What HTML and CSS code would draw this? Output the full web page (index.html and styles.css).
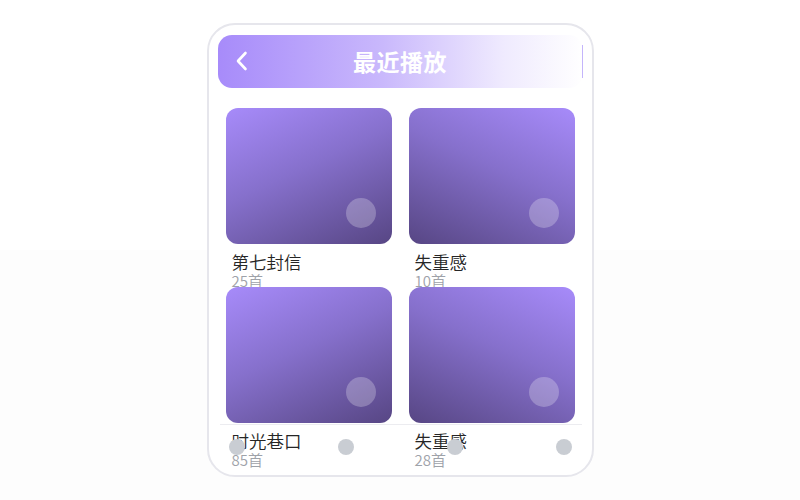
FILE: index.html
```html
<!DOCTYPE html>
<html lang="zh-CN">
<head>
    <meta charset="UTF-8">
    <meta name="viewport" content="width=device-width, initial-scale=1.0">
    <title>最近播放</title>
    <link rel="stylesheet" href="styles.css">
</head>
<body>
<div class="phone">
    <header class="top-bar">
        <button class="back" aria-label="返回">
            <svg width="14" height="20" viewBox="0 0 14 20">
                <path d="M10.5 2 L3 10 L10.5 18" fill="none" stroke="#fff" stroke-width="2.6" stroke-linecap="round" stroke-linejoin="round"/>
            </svg>
        </button>
        <h1>最近播放</h1>
    </header>

    <div class="playlists">
        <div class="playlist">
            <div class="cover"><span class="play-dot"></span></div>
            <div class="name">第七封信</div>
            <div class="count">25首</div>
        </div>
        <div class="playlist">
            <div class="cover flip"><span class="play-dot"></span></div>
            <div class="name">失重感</div>
            <div class="count">10首</div>
        </div>
        <div class="playlist">
            <div class="cover"><span class="play-dot"></span></div>
            <div class="name">时光巷口</div>
            <div class="count">85首</div>
        </div>
        <div class="playlist">
            <div class="cover flip"><span class="play-dot"></span></div>
            <div class="name">失重感</div>
            <div class="count">28首</div>
        </div>
    </div>

    <nav class="tab-bar">
        <span class="tab"></span>
        <span class="tab"></span>
        <span class="tab"></span>
        <span class="tab"></span>
    </nav>
</div>
</body>
</html>
```

FILE: styles.css
```css
* {
    box-sizing: border-box;
    margin: 0;
    padding: 0;
}

body {
    height: 100vh;
    display: flex;
    align-items: center;
    justify-content: center;
    font-family: "Noto Sans CJK SC", "Noto Sans", sans-serif;
    background: linear-gradient(#ffffff 50%, #fdfdfd 50%);
}

/* Phone frame */
.phone {
    position: relative;
    width: 387px;
    height: 454px;
    padding: 10px 9px;
    border: 2px solid #e6e6ec;
    border-radius: 28px;
    background: #fff;
    overflow: hidden;
}

/* Header */
.top-bar {
    position: relative;
    height: 53px;
    display: flex;
    align-items: center;
    justify-content: center;
    border-radius: 14px;
    background: linear-gradient(to right, #a78bfa 0%, #c9b8fc 45%, #efeafe 78%, #ffffff 100%);
}

.top-bar::after {
    content: "";
    position: absolute;
    right: 0;
    top: 10px;
    bottom: 10px;
    width: 1px;
    background: #c4b5fb;
}

.back {
    position: absolute;
    left: 17px;
    top: 16px;
    border: none;
    background: none;
    display: flex;
}

.top-bar h1 {
    font-size: 23px;
    font-weight: 700;
    line-height: 1.2;
    color: #fff;
    letter-spacing: 0.5px;
}

/* Playlist grid */
.playlists {
    display: grid;
    grid-template-columns: 1fr 1fr;
    grid-auto-rows: 179px;
    column-gap: 17px;
    margin-top: 20px;
    padding: 0 8px;
}

.cover {
    position: relative;
    height: 136px;
    border-radius: 12px;
    background: linear-gradient(155deg, #a78bfa 0%, #8670cc 45%, #574684 100%);
}

.cover.flip {
    background: linear-gradient(205deg, #a78bfa 0%, #8670cc 45%, #574684 100%);
}

.play-dot {
    position: absolute;
    right: 16px;
    bottom: 16px;
    width: 30px;
    height: 30px;
    border-radius: 50%;
    background: rgba(255, 255, 255, 0.25);
}

.name {
    margin-top: 8px;
    padding-left: 6px;
    font-size: 17.5px;
    font-weight: 350;
    line-height: 20px;
    color: #262626;
}

.count {
    margin-top: 2px;
    padding-left: 6px;
    font-size: 15px;
    font-weight: 350;
    line-height: 14px;
    color: #9ea2a9;
}

/* Bottom tabs */
.tab-bar {
    position: absolute;
    left: 11px;
    right: 10px;
    bottom: 7px;
    height: 44px;
    display: flex;
    align-items: center;
    justify-content: space-between;
    padding: 0 10px 0 9px;
    border-top: 1px solid #ececf0;
}

.tab {
    width: 16px;
    height: 16px;
    border-radius: 50%;
    background: #c9cdd3;
}
```
